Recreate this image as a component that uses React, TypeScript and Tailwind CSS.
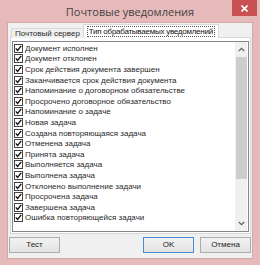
const items = [
  'Документ исполнен',
  'Документ отклонен',
  'Срок действия документа завершен',
  'Заканчивается срок действия документа',
  'Напоминание о договорном обязательстве',
  'Просрочено договорное обязательство',
  'Напоминание о задаче',
  'Новая задача',
  'Создана повторяющаяся задача',
  'Отменена задача',
  'Принята задача',
  'Выполняется задача',
  'Выполнена задача',
  'Отклонено выполнение задачи',
  'Просрочена задача',
  'Завершена задача',
  'Ошибка повторяющейся задачи',
]

const font = { fontFamily: '"Liberation Sans", Arial, sans-serif' }

function Check() {
  return (
    <span className="w-[9px] h-[9px] border border-[#444] bg-white flex items-center justify-center shrink-0">
      <svg width="7" height="7" viewBox="0 0 7 7">
        <path d="M0.8 3.4 L2.6 5.4 L6.2 0.9" stroke="#111" strokeWidth="1.4" fill="none" />
      </svg>
    </span>
  )
}

function Btn({ label, focused }: { label: string; focused?: boolean }) {
  return (
    <button
      className={
        'h-[16px] w-[51px] text-[8px] text-[#222] bg-gradient-to-b from-[#f2f2f2] to-[#e3e3e3] border ' +
        (focused ? 'border-[#4a8cd0]' : 'border-[#adadad]')
      }
      style={font}
    >
      {label}
    </button>
  )
}

export default function App() {
  return (
    <div className="w-[260px] h-[265px] bg-[#e6b9ba] flex flex-col" style={font}>
      <div className="h-[22px] relative flex items-center justify-center">
        <span className="text-[11px] text-[#444] mt-[2px]" style={{ fontFamily: '"Open Sans", "Liberation Sans", sans-serif' }}>
          Почтовые уведомления
        </span>
        <div className="absolute right-[3px] top-0 w-[25px] h-[16px] bg-[#c75050] flex items-center justify-center">
          <svg width="7" height="7" viewBox="0 0 7 7">
            <path d="M0.5 0.5 L6.5 6.5 M6.5 0.5 L0.5 6.5" stroke="#fff" strokeWidth="1.6" />
          </svg>
        </div>
      </div>
      <div className="mx-[7px] h-[237px] bg-[#f0f0f0] border border-[#d4a9aa] flex flex-col">
        <div className="flex items-end h-[14px] mt-[1px] ml-[3px] relative z-10">
          <div className="h-[10px] px-[3px] flex items-center text-[8px] text-[#2a2a2a] border border-b-0 border-[#d9d9d9] bg-[#f0f0f0]">
            Почтовый сервер
          </div>
          <div className="h-[14px] w-[136px] flex items-center justify-center bg-white border border-b-0 border-[#d9d9d9] -ml-[1px]">
            <span className="text-[8px] text-[#111] border border-dotted border-[#555] px-[1px] leading-[9px] tracking-[-0.25px] whitespace-nowrap">
              Тип обрабатываемых уведомлений
            </span>
          </div>
        </div>
        <div className="ml-[2px] w-[241px] h-[197px] -mt-[1px] bg-white border border-[#d9d9d9] pt-[3px] px-[1px] pb-[1px]">
          <div className="h-full border border-[#828790] flex">
            <div className="flex-1 pt-[1px] pl-[1px]">
              {items.map((t) => (
                <div key={t} className="h-[10.6px] flex items-center gap-[2px]">
                  <Check />
                  <span className="text-[8px] leading-[9px] text-[#2a2a2a] whitespace-nowrap">{t}</span>
                </div>
              ))}
            </div>
            <div className="w-[12px] mr-[1px] bg-[#f0f0f0] flex flex-col items-center">
              <div className="h-[15px] flex items-center justify-center">
                <svg width="7" height="5" viewBox="0 0 7 5">
                  <path d="M0.8 4 L3.5 1.3 L6.2 4" stroke="#606060" strokeWidth="1.2" fill="none" />
                </svg>
              </div>
              <div className="w-[11px] h-[122px] bg-[#cdcdcd]" />
              <div className="flex-1" />
              <div className="h-[15px] flex items-center justify-center">
                <svg width="7" height="5" viewBox="0 0 7 5">
                  <path d="M0.8 1 L3.5 3.7 L6.2 1" stroke="#606060" strokeWidth="1.2" fill="none" />
                </svg>
              </div>
            </div>
          </div>
        </div>
        <div className="flex items-center mt-[3px] pl-[1px] pr-[1px]">
          <Btn label="Тест" />
          <div className="flex-1" />
          <Btn label="OK" focused />
          <div className="w-[6px]" />
          <Btn label="Отмена" />
        </div>
      </div>
    </div>
  )
}
